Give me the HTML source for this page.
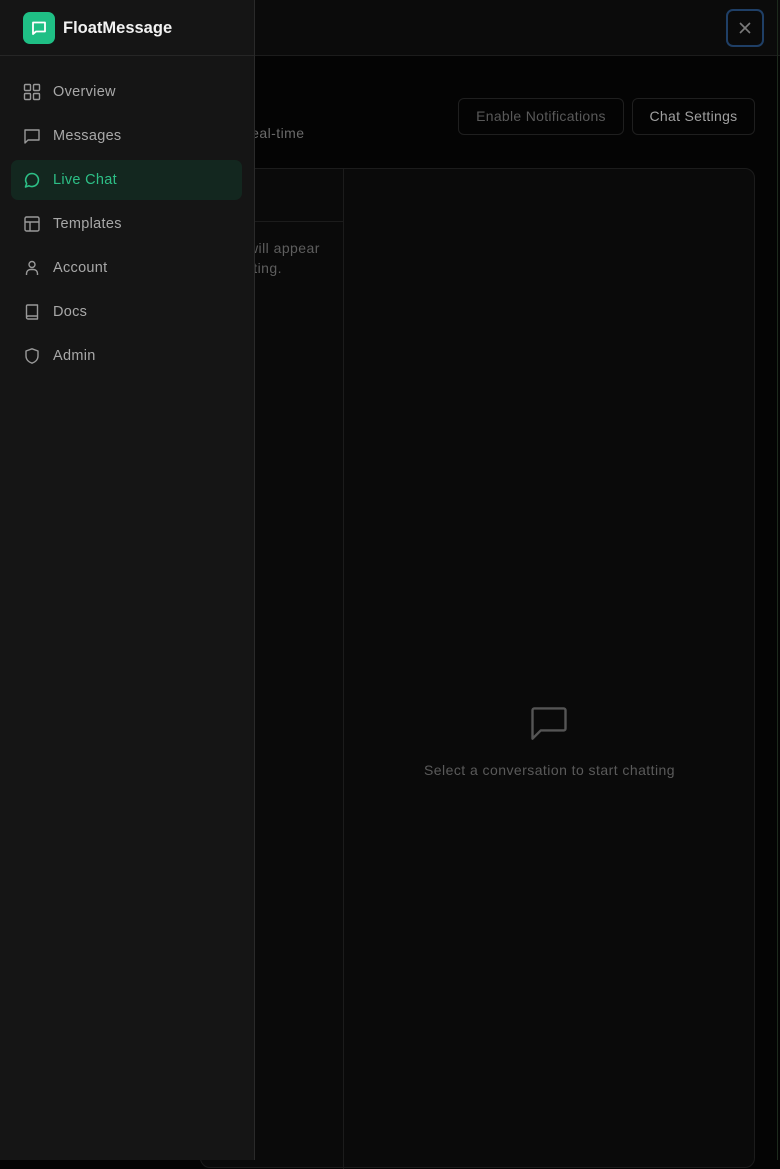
<!DOCTYPE html>
<html><head><style>
*{margin:0;padding:0;box-sizing:border-box}
body{width:780px;height:1160px;overflow:hidden;background:#040404;font-family:"Liberation Sans",sans-serif;position:relative}
.hdr{position:absolute;left:0;top:0;width:780px;height:56px;background:#0b0b0b;border-bottom:1px solid #1c1c1c}
.close{position:absolute;left:726px;top:9px;width:38px;height:38px;border:2px solid #1f3f66;border-radius:7px;background:#0a0a0a}
.btn{position:absolute;top:98px;height:37px;border:1px solid #1f1f1f;border-radius:6px;font-size:14px;line-height:35px;text-align:center;letter-spacing:0.3px}
.card{position:absolute;left:200px;top:168px;width:555px;height:1000px;background:#0a0a0a;border:1px solid #1c1c1c;border-radius:10px}
.side{position:absolute;left:0;top:0;width:255px;height:1160px;background:#151515;border-right:1px solid #2a2a2a}
.logo{position:absolute;left:23px;top:12px;width:32px;height:32px;background:#1fbf85;border-radius:7px}
.brand{position:absolute;left:63px;top:19px;color:#f2f2f2;font-weight:bold;font-size:16.5px}
.sl{position:absolute;left:0;top:55px;width:254px;border-top:1px solid #262626}
.item{position:absolute;left:11px;width:231px;height:40px;border-radius:7px;color:#a8a8a8;font-size:14.5px;letter-spacing:0.3px}
.item svg{position:absolute;left:12px;top:11px}
.item span{position:absolute;left:42px;top:12px}
.act{background:#13271f;color:#2dbf86}
.t{position:absolute;color:#5a5a5a;font-size:14px;letter-spacing:0.45px;white-space:nowrap}
</style></head><body>
<div class="hdr"></div>
<div class="close"><svg width="34" height="34" viewBox="0 0 34 34" style="position:absolute;left:0;top:0"><path d="M12 12l10 10M22 12l-10 10" stroke="#7a7a7a" stroke-width="1.6"/></svg></div>
<div class="t" style="left:246px;top:125px;color:#6a6a6a">real-time</div>
<div class="btn" style="left:458px;width:166px;color:#595959">Enable Notifications</div>
<div class="btn" style="left:632px;width:123px;color:#a0a0a0">Chat Settings</div>
<div class="card">
<div style="position:absolute;left:142px;top:0;width:1px;height:1000px;background:#1c1c1c"></div>
<div style="position:absolute;left:0;top:52px;width:142px;height:1px;background:#1c1c1c"></div>
<div class="t" style="left:47px;top:71px;color:#5e5e5e">will appear</div>
<div class="t" style="left:24px;top:91px;color:#5e5e5e">chatting.</div>
<svg width="44" height="44" viewBox="0 0 24 24" style="position:absolute;left:326px;top:533px" fill="none" stroke="#555" stroke-width="1.3" stroke-linejoin="round"><path d="M3 4.5a1 1 0 011-1h16a1 1 0 011 1v10a1 1 0 01-1 1H7.5L3 20z"/></svg>
<div class="t" style="left:223px;top:593px">Select a conversation to start chatting</div>
</div>
<div style="position:absolute;left:777px;top:0;width:1px;height:1160px;background:#1d2a1d"></div>
<div class="side">
<div class="logo"><svg width="32" height="32" viewBox="0 0 32 32"><path d="M10 10.5h12v9h-9l-3 2.5z" fill="none" stroke="#fff" stroke-width="1.8" stroke-linejoin="round"/></svg></div>
<div class="brand">FloatMessage</div>
<div class="sl"></div>
<div class="item" style="top:72px"><svg width="18" height="18" viewBox="0 0 18 18" fill="none" stroke="#999" stroke-width="1.4"><rect x="1.5" y="1.5" width="6" height="6" rx="1"/><rect x="10.5" y="1.5" width="6" height="6" rx="1"/><rect x="1.5" y="10.5" width="6" height="6" rx="1"/><rect x="10.5" y="10.5" width="6" height="6" rx="1"/></svg><span>Overview</span></div>
<div class="item" style="top:116px"><svg width="18" height="18" viewBox="0 0 18 18" fill="none" stroke="#999" stroke-width="1.4" stroke-linejoin="round"><path d="M2 3h14v10H5l-3 3z"/></svg><span>Messages</span></div>
<div class="item act" style="top:160px"><svg width="18" height="18" viewBox="0 0 18 18" fill="none" stroke="#2dbf86" stroke-width="1.6" stroke-linejoin="round"><path d="M9 2.5a6.5 6.5 0 11-3 12.3L2.5 16l1.2-3.5A6.5 6.5 0 019 2.5z"/></svg><span>Live Chat</span></div>
<div class="item" style="top:204px"><svg width="18" height="18" viewBox="0 0 18 18" fill="none" stroke="#999" stroke-width="1.4"><rect x="2" y="2" width="14" height="14" rx="1.5"/><path d="M2 7h14M7 7v9"/></svg><span>Templates</span></div>
<div class="item" style="top:248px"><svg width="18" height="18" viewBox="0 0 18 18" fill="none" stroke="#999" stroke-width="1.4"><circle cx="9" cy="5.5" r="3"/><path d="M3.5 16v-1.5a4 4 0 014-4h3a4 4 0 014 4V16"/></svg><span>Account</span></div>
<div class="item" style="top:292px"><svg width="18" height="18" viewBox="0 0 18 18" fill="none" stroke="#999" stroke-width="1.4" stroke-linejoin="round"><path d="M3.5 14.5V3a1 1 0 011-1h10v14h-9.5a1.5 1.5 0 01-1.5-1.5 1.5 1.5 0 011.5-1.5h9.5"/></svg><span>Docs</span></div>
<div class="item" style="top:336px"><svg width="18" height="18" viewBox="0 0 18 18" fill="none" stroke="#999" stroke-width="1.4" stroke-linejoin="round"><path d="M9 1.8l6 2.2v5c0 3.8-3 6.2-6 7.2-3-1-6-3.4-6-7.2V4z"/></svg><span>Admin</span></div>
</div>
</body></html>
